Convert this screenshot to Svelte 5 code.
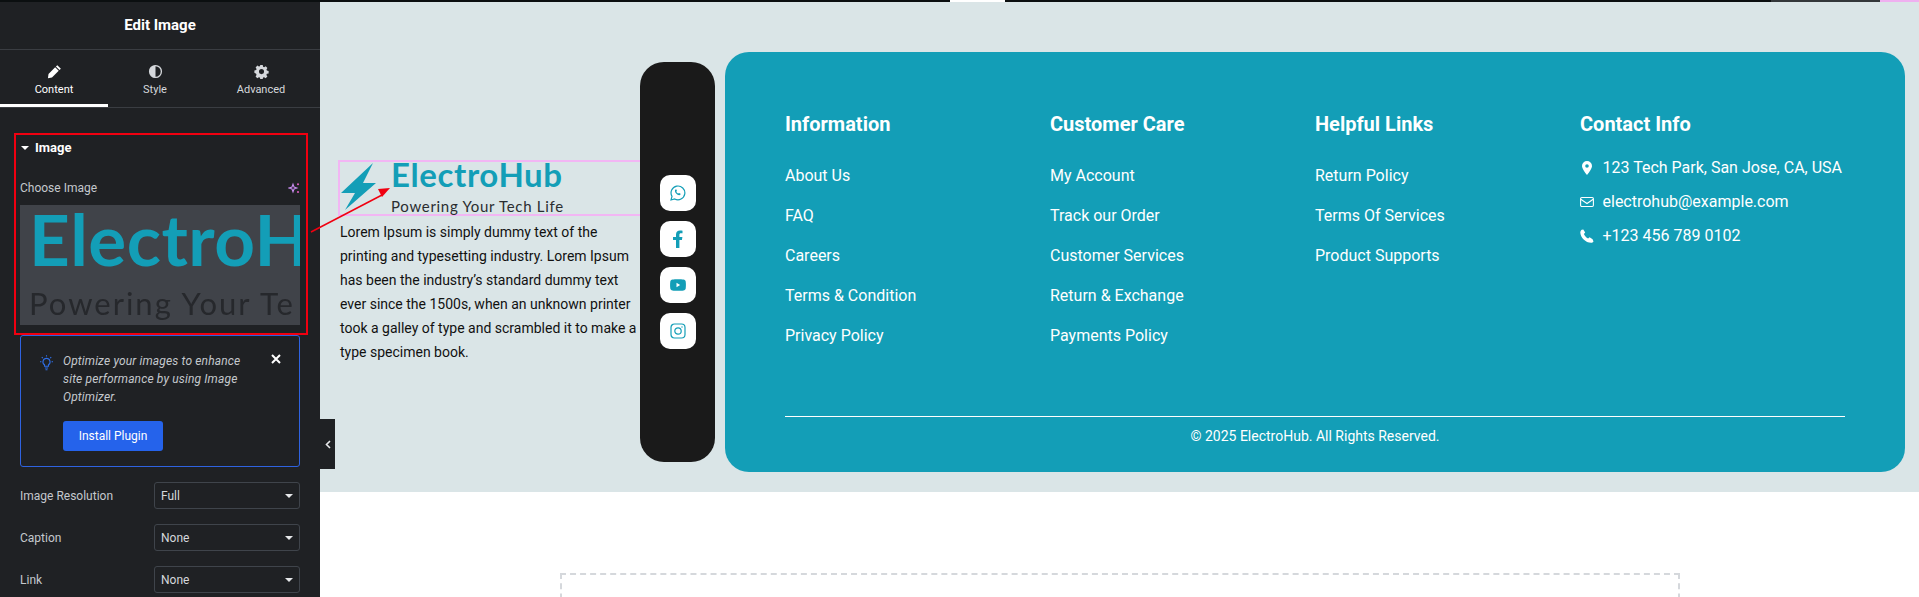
<script lang="ts">
	const tabs = [
		{ label: 'Content', icon: 'pencil', active: true },
		{ label: 'Style', icon: 'contrast', active: false },
		{ label: 'Advanced', icon: 'gear', active: false }
	];
	const settings = [
		{ label: 'Image Resolution', value: 'Full' },
		{ label: 'Caption', value: 'None' },
		{ label: 'Link', value: 'None' }
	];
	const columns = [
		{ title: 'Information', links: ['About Us', 'FAQ', 'Careers', 'Terms & Condition', 'Privacy Policy'] },
		{ title: 'Customer Care', links: ['My Account', 'Track our Order', 'Customer Services', 'Return & Exchange', 'Payments Policy'] },
		{ title: 'Helpful Links', links: ['Return Policy', 'Terms Of Services', 'Product Supports'] }
	];
</script>

<div class="page">
	<div class="topbar">
		<span class="topbar__dark"></span>
		<span class="topbar__white"></span>
		<span class="topbar__dark topbar__dark--mid"></span>
		<span class="topbar__grey"></span>
		<span class="topbar__pink"></span>
	</div>

	<div class="workspace">
		<aside class="panel">
			<h1 class="panel__title">Edit Image</h1>

			<nav class="tabs">
				{#each tabs as tab}
					<div class="tab tab--{tab.icon}" class:tab--active={tab.active}>
						<svg class="tab__icon" viewBox="0 0 16 16" aria-hidden="true">
							{#if tab.icon === 'pencil'}
								<path d="M11 1.2l3.8 3.8-1.5 1.5-3.8-3.8zM8.7 3.5l3.8 3.8-7.2 7.2-4.3.6.6-4.4z" fill="currentColor" />
							{:else if tab.icon === 'contrast'}
								<circle cx="8" cy="8" r="6.3" fill="none" stroke="currentColor" stroke-width="1.4" />
								<path d="M8 1.7a6.3 6.3 0 0 0 0 12.6z" fill="currentColor" />
							{:else}
								<path fill="currentColor" fill-rule="evenodd" d="M6.7 1h2.6l.4 1.9 1.1.5 1.7-1 1.8 1.9-1 1.6.4 1.1 1.9.5v2.6l-1.9.4-.5 1.1 1.1 1.7-1.9 1.8-1.6-1-1.1.4-.5 1.9H6.7l-.4-1.9-1.1-.4-1.7 1-1.8-1.9 1-1.6-.4-1.1L.4 9.4V6.8l1.9-.4.5-1.2-1.1-1.6 1.9-1.9 1.6 1 1.1-.4zM8 5.4a2.7 2.7 0 1 0 0 5.4 2.7 2.7 0 0 0 0-5.4z" />
							{/if}
						</svg>
						<span>{tab.label}</span>
					</div>
				{/each}
			</nav>

			<div class="panel__body">
				<section class="image-section">
					<h2 class="image-section__title"><span class="caret caret--white"></span>Image</h2>
					<div class="image-section__label">
						<span>Choose Image</span>
						<svg width="12" height="12" viewBox="0 0 12 12" aria-hidden="true">
							<path d="M5 2.2l1 2.8 2.8 1-2.8 1-1 2.8-1-2.8-2.8-1 2.8-1z" fill="none" stroke="#c98cf0" stroke-width="1.1" />
							<circle cx="10" cy="2.2" r="1" fill="#e85fc8" />
							<circle cx="10" cy="10" r="1" fill="#e85fc8" />
						</svg>
					</div>
					<!-- The logo enlarged and cropped by the control, so only this much of it shows. -->
					<div class="preview">
						<span class="preview__name">ElectroH</span>
						<span class="preview__tag">Powering Your Te</span>
					</div>
				</section>

				<div class="notice">
					<svg class="notice__bulb" width="15" height="16" viewBox="0 0 15 16" fill="none" stroke="#2f6fe8" stroke-width="1.1" aria-hidden="true">
						<path d="M7.5 3.4a3.5 3.5 0 0 0-2 6.4v1.4h4V9.800a3.500 3.500 0 0 0-2-6.400zM5.900 13h3.200M6.500 14.800h2M7.500.3v1.300M1 6.700h1.400M12.600 6.700H14M2.800 2.200l1 1M12.200 2.200l-1 1" />
					</svg>
					<div class="notice__body">
						<p>Optimize your images to enhance site performance by using Image Optimizer.</p>
						<button class="notice__button" type="button">Install Plugin</button>
					</div>
					<svg class="notice__close" width="10" height="10" viewBox="0 0 10 10" aria-hidden="true">
						<path d="M1 1l8 8M9 1L1 9" stroke="#fff" stroke-width="2" />
					</svg>
				</div>

				<div class="settings">
					{#each settings as setting}
						<div class="setting">
							<span>{setting.label}</span>
							<div class="select">{setting.value}<span class="caret"></span></div>
						</div>
					{/each}
				</div>
			</div>
		</aside>

		<main class="canvas">
			<button class="collapse" type="button" aria-label="Collapse panel">
				<svg width="6" height="9" viewBox="0 0 6 9" aria-hidden="true">
					<path d="M5 1L1.500 4.500 5 8" fill="none" stroke="#e6e8ea" stroke-width="1.600" />
				</svg>
			</button>

			<section class="site">
				<div class="about">
					<div class="logo">
						<svg class="logo__bolt" width="38" height="50" viewBox="0 0 38 50" aria-hidden="true">
							<path d="M34 1L2 31h14L6 48 37 21H24z" fill="#139eb7" />
						</svg>
						<div class="logo__text">
							<span class="logo__name">ElectroHub</span>
							<span class="logo__tag">Powering Your Tech Life</span>
						</div>
					</div>
					<p class="about__copy">
						Lorem Ipsum is simply dummy text of the printing and typesetting industry. Lorem Ipsum has been the industry’s standard dummy text ever since the 1500s, when an unknown printer took a galley of type and scrambled it to make a type specimen book.
					</p>
				</div>

				<div class="social">
					<a class="social__btn" href="#whatsapp" aria-label="WhatsApp">
						<svg width="16" height="16" viewBox="0 0 16 16" fill="none" stroke="currentColor" aria-hidden="true">
							<path d="M1 15l1-3.600A6.900 6.900 0 1 1 4.700 14z" stroke-width="1.200" />
							<path d="M5.500 4.500c-1 1-.7 2.500.7 4s3 2.200 4.200 1.300l.2-1-1.600-.9-.7.700c-1-.4-1.600-1-2-2l.7-.700-.8-1.600z" fill="currentColor" stroke="none" />
						</svg>
					</a>
					<a class="social__btn" href="#facebook" aria-label="Facebook">
						<svg width="12" height="18" viewBox="0 0 12 18" aria-hidden="true">
							<path d="M4 18v-8H1V7h3V4.500C4 1.700 5.600.5 8 .5c1 0 2 .1 2.500.2v2.600H9c-1.200 0-1.600.6-1.600 1.500V7h3l-.5 3H7.400v8z" fill="currentColor" />
						</svg>
					</a>
					<a class="social__btn" href="#youtube" aria-label="YouTube">
						<svg width="16" height="12" viewBox="0 0 16 12" aria-hidden="true">
							<path fill="currentColor" fill-rule="evenodd" d="M2.500.6C5 .2 11 .2 13.500.6c1.300.2 2 1 2.200 2 .3 2 .3 4.800 0 6.800-.2 1-.9 1.800-2.200 2-2.500.4-8.500.4-11 0-1.300-.2-2-1-2.200-2-.3-2-.3-4.800 0-6.800.2-1 .9-1.800 2.200-2zM6.500 3.800v4.400L10.200 6z" />
						</svg>
					</a>
					<a class="social__btn" href="#instagram" aria-label="Instagram">
						<svg width="16" height="16" viewBox="0 0 16 16" fill="none" stroke="currentColor" stroke-width="1.200" aria-hidden="true">
							<rect x="1" y="1" width="14" height="14" rx="3.500" />
							<circle cx="8" cy="8" r="3.200" />
							<circle cx="12" cy="4" r=".7" fill="currentColor" stroke="none" />
						</svg>
					</a>
				</div>

				<footer class="footer">
					<div class="footer__columns">
						{#each columns as column}
							<div class="footer__col">
								<h3>{column.title}</h3>
								<ul>
									{#each column.links as link}
										<li>{link}</li>
									{/each}
								</ul>
							</div>
						{/each}
						<div class="footer__col">
							<h3 class="contact-heading">Contact Info</h3>
							<ul class="contact">
								<li>
									<svg width="14" height="14" viewBox="0 0 14 14" aria-hidden="true">
										<path fill="#fff" fill-rule="evenodd" d="M7 0a5 5 0 0 1 5 5c0 2.300-3 6.800-5 9-2-2.200-5-6.700-5-9a5 5 0 0 1 5-5zm0 3.200a1.800 1.800 0 1 0 0 3.600 1.800 1.800 0 0 0 0-3.600z" />
									</svg>
									123 Tech Park, San Jose, CA, USA
								</li>
								<li>
									<svg width="14" height="14" viewBox="0 0 14 14" fill="none" stroke="#fff" stroke-width="1.100" aria-hidden="true">
										<rect x=".6" y="2.500" width="12.800" height="9" rx="1.200" />
										<path d="M.8 4.300L7 8.500l6.200-4.200" />
									</svg>
									electrohub@example.com
								</li>
								<li>
									<svg width="14" height="14" viewBox="0 0 14 14" aria-hidden="true">
										<path fill="#fff" d="M3.300.4l1.900 3-1.300 1.500c.7 1.800 2.300 3.600 4.200 4.600l1.500-1.300 3 2 .9 2.200c-.5.800-1.400 1.300-2.400 1.300C5.600 13.700.4 8.300.3 3.400.3 2.300.9 1.300 1.700.7z" />
									</svg>
									+123 456 789 0102
								</li>
							</ul>
						</div>
					</div>
					<p class="footer__copy">© 2025 ElectroHub. All Rights Reserved.</p>
				</footer>
			</section>

			<div class="dropzone"></div>
		</main>
	</div>

	<!-- Annotation drawn over the screenshot: the box and the arrow. -->
	<div class="callout"></div>
	<svg class="arrow" width="110" height="60" viewBox="0 0 110 60" aria-hidden="true">
		<path d="M1 52L72 15" stroke="#f00010" stroke-width="1.500" />
		<path d="M80 8L68 9l4 8z" fill="#f00010" />
	</svg>
</div>

<style>
	:global(body) {
		margin: 0;
		background: #fff;
	}

	.page {
		position: relative;
		display: flex;
		flex-direction: column;
		width: 1919px;
		height: 597px;
		overflow: hidden;
		font-family: Roboto, 'Liberation Sans', sans-serif;
	}

	.topbar {
		display: flex;
		flex: none;
		height: 2px;
	}

	.topbar__dark {
		width: 950px;
		background: #0b0f10;
	}

	.topbar__dark--mid {
		width: 766px;
	}

	.topbar__white {
		width: 55px;
		background: #fff;
	}

	.topbar__grey {
		width: 109px;
		background: #33373a;
	}

	.topbar__pink {
		flex: 1;
		background: #efb0f0;
	}

	.workspace {
		display: flex;
		flex: 1;
		min-height: 0;
	}

	/* Left editor panel */
	.panel {
		flex: none;
		width: 320px;
		background: #1f2124;
		color: #fff;
	}

	.panel__title {
		height: 47px;
		margin: 0;
		border-bottom: 1px solid #3a3d42;
		font-size: 15px;
		font-weight: 700;
		line-height: 46px;
		text-align: center;
	}

	.tabs {
		display: flex;
		height: 57px;
		border-bottom: 1px solid #3a3d42;
	}

	.tab {
		display: flex;
		flex-direction: column;
		align-items: center;
		gap: 4px;
		padding-top: 14px;
		box-sizing: border-box;
		color: #d5d8dc;
		font-size: 11px;
		line-height: 13px;
	}

	.tab--pencil {
		width: 108px;
	}

	.tab--contrast {
		width: 94px;
	}

	.tab--gear {
		width: 118px;
	}

	.tab--active {
		border-bottom: 3px solid #fff;
		color: #fff;
	}

	.tab__icon {
		width: 15px;
		height: 15px;
	}

	.panel__body {
		padding: 32px 20px 0;
	}

	.image-section__title {
		display: flex;
		align-items: center;
		gap: 6px;
		margin: 0 0 24px;
		padding-left: 1px;
		font-size: 13px;
		font-weight: 700;
		line-height: 16px;
	}

	.image-section__label {
		display: flex;
		align-items: center;
		justify-content: space-between;
		margin-bottom: 9px;
		color: #c4c8cd;
		font-size: 12px;
		line-height: 16px;
	}

	.preview {
		display: flex;
		flex-direction: column;
		height: 120px;
		padding-left: 9px;
		box-sizing: border-box;
		overflow: hidden;
		background: #404349;
		white-space: nowrap;
	}

	.preview__name {
		color: #139eb7;
		font-family: Lato, sans-serif;
		font-size: 71px;
		font-weight: 700;
		letter-spacing: 0.5px;
		line-height: 68px;
		filter: blur(0.4px);
	}

	.preview__tag {
		margin-top: 10px;
		color: #26282c;
		font-family: Lato, sans-serif;
		font-size: 31px;
		letter-spacing: 2px;
		line-height: 40px;
		filter: blur(0.5px);
	}

	.notice {
		display: flex;
		gap: 9px;
		height: 132px;
		margin-top: 10px;
		padding: 16px 18px 0 18px;
		box-sizing: border-box;
		border: 1px solid #2f63e0;
		border-radius: 3px;
	}

	.notice__bulb {
		flex: none;
		margin-top: 3px;
	}

	.notice__body {
		flex: 1;
	}

	.notice__body p {
		margin: 0 10px 15px 0;
		color: #c4c8cd;
		font-size: 12px;
		font-style: italic;
		letter-spacing: 0.15px;
		line-height: 18px;
	}

	.notice__button {
		display: block;
		width: 100px;
		height: 30px;
		padding: 0;
		border: 0;
		border-radius: 3px;
		background: #2563eb;
		color: #fff;
		font-family: inherit;
		font-size: 12px;
	}

	.notice__close {
		flex: none;
		margin-top: 2px;
	}

	.settings {
		display: flex;
		flex-direction: column;
		gap: 15px;
		margin-top: 15px;
	}

	.setting {
		display: flex;
		align-items: center;
		justify-content: space-between;
		color: #c4c8cd;
		font-size: 12px;
	}

	.select {
		display: flex;
		align-items: center;
		justify-content: space-between;
		width: 146px;
		height: 27px;
		padding: 0 6px;
		box-sizing: border-box;
		border: 1px solid #3f444b;
		border-radius: 3px;
		color: #d5d8dc;
	}

	.caret {
		width: 0;
		height: 0;
		border-top: 4px solid #e6e8ea;
		border-left: 4px solid transparent;
		border-right: 4px solid transparent;
	}

	.caret--white {
		border-top-color: #fff;
	}

	/* Page preview */
	.canvas {
		position: relative;
		flex: 1;
		min-width: 0;
		background: #fff;
	}

	.collapse {
		position: absolute;
		top: 417px;
		left: 0;
		z-index: 1;
		display: flex;
		align-items: center;
		justify-content: center;
		width: 15px;
		height: 50px;
		padding: 0;
		border: 0;
		background: #1f2124;
	}

	.site {
		display: flex;
		height: 490px;
		padding: 50px 14px 20px 18px;
		box-sizing: border-box;
		background: #dae5e7;
	}

	.about {
		flex: none;
		align-self: center;
		width: 302px;
	}

	.logo {
		display: flex;
		height: 56px;
		box-sizing: border-box;
		border: 1px solid #f2b6f4;
		border-width: 1px 0 1px 1px;
		box-shadow: inset 0 1px 0 #f2b6f4, inset 0 -1px 0 #f2b6f4, inset 1px 0 0 #f2b6f4;
	}

	.logo__bolt {
		flex: none;
		margin-top: 1px;
	}

	.logo__text {
		display: flex;
		flex-direction: column;
		margin-left: 14px;
		white-space: nowrap;
	}

	.logo__name {
		margin-top: -2px;
		color: #139eb7;
		font-family: Lato, sans-serif;
		font-size: 33px;
		font-weight: 700;
		letter-spacing: 0.6px;
		line-height: 31px;
	}

	.logo__tag {
		margin-top: 7px;
		color: #2a2d30;
		font-family: Lato, sans-serif;
		font-size: 15px;
		letter-spacing: 0.7px;
		line-height: 18px;
	}

	.about__copy {
		width: 298px;
		margin: 4px 0 0 2px;
		color: #111;
		font-size: 14px;
		line-height: 24px;
	}

	.social {
		display: flex;
		flex: none;
		flex-direction: column;
		justify-content: center;
		gap: 10px;
		width: 75px;
		margin: 10px 10px 10px 0;
		padding-left: 20px;
		box-sizing: border-box;
		border-radius: 24px;
		background: #1a1a1a;
	}

	.social__btn {
		display: flex;
		align-items: center;
		justify-content: center;
		width: 36px;
		height: 36px;
		border-radius: 10px;
		background: #fff;
		color: #139eb7;
	}

	.footer {
		display: flex;
		flex: 1;
		flex-direction: column;
		padding: 60px 60px 24px;
		border-radius: 24px;
		background: #139eb7;
		color: #fff;
	}

	.footer__columns {
		display: grid;
		flex: 1;
		grid-template-columns: repeat(4, 1fr);
	}

	.footer__col h3 {
		margin: 0 0 28px;
		font-size: 20px;
		font-weight: 700;
		line-height: 24px;
	}

	.footer__col h3.contact-heading {
		margin-bottom: 20px;
	}

	.footer__col ul {
		display: flex;
		flex-direction: column;
		gap: 16px;
		margin: 0;
		padding: 0;
		font-size: 16px;
		line-height: 24px;
		list-style: none;
	}

	.footer__col ul.contact {
		gap: 10px;
		white-space: nowrap;
	}

	.contact li {
		display: flex;
		align-items: center;
		gap: 8.500px;
	}

	.footer__copy {
		margin: 0;
		padding-top: 7px;
		border-top: 1px solid #fff;
		font-size: 14px;
		line-height: 24px;
		text-align: center;
	}

	.dropzone {
		width: 1120px;
		height: 200px;
		margin: 81px 0 0 240px;
		box-sizing: border-box;
		border: 2px dashed #d5d8dc;
	}

	/* Annotation */
	.callout {
		position: absolute;
		top: 133px;
		left: 14px;
		width: 294px;
		height: 202px;
		box-sizing: border-box;
		border: 2px solid #f00010;
	}

	.arrow {
		position: absolute;
		top: 180px;
		left: 310px;
	}
</style>
